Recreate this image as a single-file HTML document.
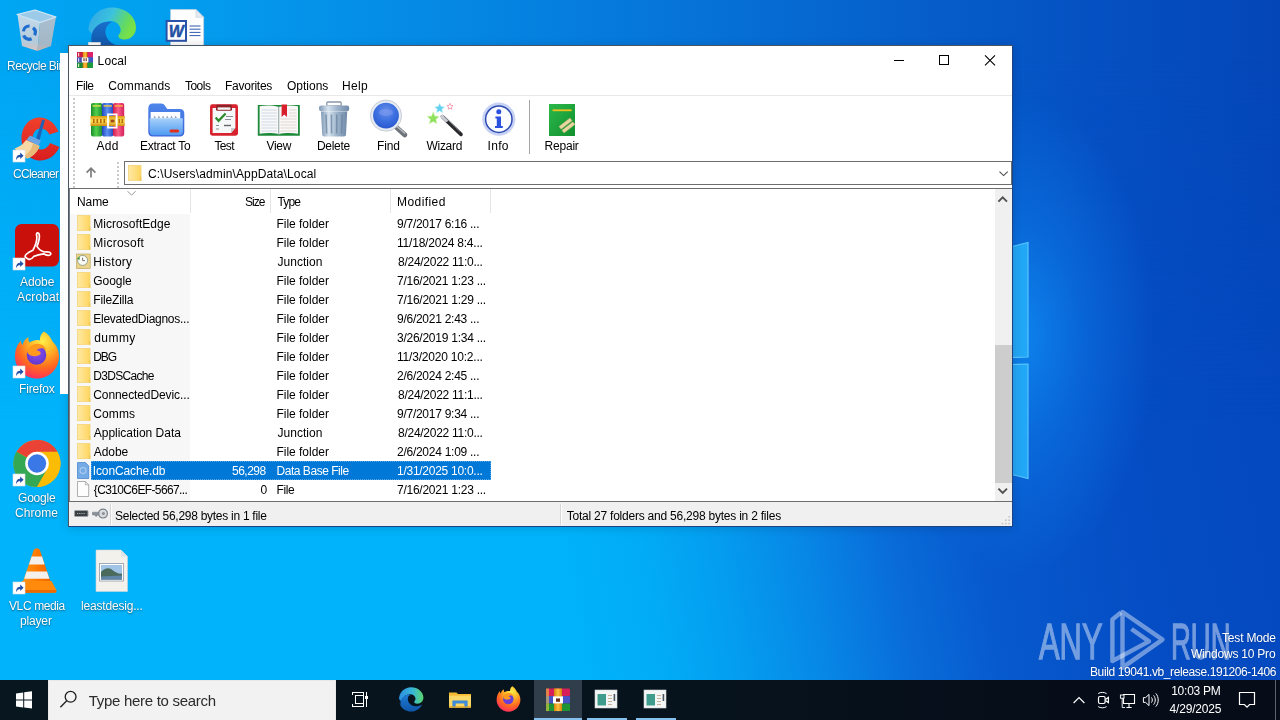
<!DOCTYPE html>
<html lang="en">
<head>
<meta charset="utf-8">
<title>Local - WinRAR</title>
<style>
*{box-sizing:border-box;margin:0;padding:0}
html,body{width:1280px;height:720px;overflow:hidden}
body{position:relative;font-family:"Liberation Sans",sans-serif;font-size:12px;color:#000;background:#0a6fd8}
#wall{position:absolute;left:0;top:0;width:1280px;height:720px;
 background:linear-gradient(80deg,#00b3fa 0%,#00b3fa 42%,#02abf6 48%,#049cef 53.5%,#0786e6 59.5%,#096cd9 65.5%,#0759cd 72%,#054dc4 83%,#0446bd 100%)}
#wallTop{position:absolute;left:0;top:0;width:1280px;height:420px;
 background:linear-gradient(90deg,#00a6f3 0,#02a0ef 150px,#0498ec 240px,#058ce6 400px,#0584e2 500px,#0672d8 700px,#0660cc 900px,#0550c2 1100px,#0446b8 1280px);
 -webkit-mask-image:linear-gradient(180deg,#000 0,#000 60px,rgba(0,0,0,0) 100%);mask-image:linear-gradient(180deg,#000 0,#000 60px,rgba(0,0,0,0) 100%)}
#glow{position:absolute;left:0;top:0;width:1280px;height:720px;
 background:radial-gradient(ellipse 135px 240px at 1020px 335px, rgba(14,136,240,.9), rgba(14,130,238,.45) 45%, rgba(16,132,236,0) 100%)}
#win,#task,.dlabel,.wm{will-change:transform}
svg.ov{position:absolute;left:0;top:0;width:1280px;height:720px;pointer-events:none}
.dlabel{position:absolute;color:#fff;font-size:12px;line-height:15px;text-shadow:0 1px 2px rgba(0,0,0,.42),0 0 1px rgba(0,0,0,.3);white-space:nowrap}
#backwin{position:absolute;left:60px;top:53px;width:8px;height:341px;background:#fdfdfd}
#win{position:absolute;left:68px;top:45px;width:945px;height:482px;background:#fff;border:1px solid #4a5562;border-right-color:#1c4484;border-bottom-color:#1c4484;box-shadow:0 1px 9px rgba(0,0,0,.16)}
#title{position:absolute;left:0;top:0;width:943px;height:29px;background:#fff}
#title .t{position:absolute;top:8px;font-size:12px;line-height:14px;white-space:pre}
#menu{position:absolute;left:0;top:29px;width:943px;height:20px;background:#fff}
#menu span{position:absolute;top:4px;line-height:14px;white-space:pre}
#menusep{position:absolute;left:0;top:49px;width:943px;height:1px;background:#e8e8e8}
#tool{position:absolute;left:0;top:50px;width:943px;height:63px;background:#fff}
.tl{position:absolute;top:43px;line-height:14px;white-space:pre}
#addr{position:absolute;left:0;top:113px;width:943px;height:28px;background:#fff}
#combo{position:absolute;left:55px;top:2px;width:888px;height:24px;border:1px solid #6e6e6e;background:#fff}
#combo .p{position:absolute;top:5px;line-height:14px;white-space:pre}
#listwrap{position:absolute;left:0;top:142px;width:943px;height:314px;border-top:1px solid #6d6d6d;border-bottom:1px solid #6d6d6d;background:#fff}
#listwrap:before{content:"";position:absolute;left:0;top:0;width:1px;height:312px;background:#7a7f86;z-index:3}
#hdr{position:absolute;left:0;top:0;width:926px;height:24px;background:#fff}
#hdr span{position:absolute;top:6px;line-height:14px;white-space:pre}
#hdr i{position:absolute;top:0;width:1px;height:24px;background:#e5e5e5}
#namecol{position:absolute;left:1px;top:25px;width:120px;height:287px;background:#f7f7f7}
.row{position:absolute;left:0;width:926px;height:19px;line-height:19px;white-space:nowrap}
.row span{position:absolute;top:1px;white-space:pre}
.row.sel .bg{position:absolute;left:22px;top:0;width:400px;height:19px;background:#0078d7;outline:1px dotted rgba(255,255,255,.35);outline-offset:-1px}
.row.sel span{color:#fff}
#sbar{position:absolute;left:926px;top:0;width:17px;height:312px;background:#f0f0f0}
#sbar .th{position:absolute;left:0;top:156px;width:17px;height:138px;background:#cdcdcd}
#status{position:absolute;left:0;top:456px;width:943px;height:24px;background:#f0f0f0}
#status span{position:absolute;top:7px;line-height:14px;white-space:pre}
#status i{position:absolute;top:2px;width:2px;height:21px;background:#fff;border-left:1px solid #d7d7d7}
#task{position:absolute;left:0;top:680px;width:1280px;height:40px;background:linear-gradient(90deg,#08161f 0,#07131c 700px,#060e1a 1000px,#060c18 1280px)}
#start{position:absolute;left:0;top:0;width:48px;height:40px;background:#08171f}
#search{position:absolute;left:48px;top:0;width:288px;height:40px;background:#f2f2f2;border:1px solid #e6e8ea;border-bottom:0}
#search .t{position:absolute;font-size:15px;line-height:18px;color:#2b2b2b;white-space:pre}
#active{position:absolute;left:534px;top:0;width:48px;height:40px;background:#2f3e4a}
.ul{position:absolute;top:38px;height:2px;background:#85c1ee}
.clk{position:absolute;color:#fff;font-size:12px;line-height:18px;white-space:pre}
.wm{position:absolute;color:#fff;font-size:12px;line-height:16px;white-space:pre;text-shadow:0 0 2px rgba(0,0,0,.3)}
</style>
</head>
<body>
<div id="wall"></div><div id="wallTop"></div><div id="glow"></div>
<svg class="ov" viewBox="0 0 1280 720">
<defs>
 <linearGradient id="rb1" x1="0" y1="0" x2="0" y2="1"><stop offset="0" stop-color="#c3d9ea"/><stop offset=".75" stop-color="#b4cbdc"/><stop offset="1" stop-color="#d9c3bd"/></linearGradient>
 <linearGradient id="rb2" x1="0" y1="0" x2="0" y2="1"><stop offset="0" stop-color="#a9bfd0"/><stop offset=".8" stop-color="#a3b7c6"/><stop offset="1" stop-color="#c9b4ae"/></linearGradient>
 <linearGradient id="edg1" x1="0" y1="0" x2="1" y2=".35"><stop offset="0" stop-color="#2fa2e6"/><stop offset=".5" stop-color="#3cc2de"/><stop offset=".85" stop-color="#62da62"/><stop offset="1" stop-color="#78e048"/></linearGradient>
 <linearGradient id="edg2" x1="0" y1="0" x2="0" y2="1"><stop offset="0" stop-color="#1a6fcb"/><stop offset="1" stop-color="#0e4fa0"/></linearGradient>
 <radialGradient id="ffx" cx=".62" cy=".2" r=".95"><stop offset="0" stop-color="#fff04a"/><stop offset=".3" stop-color="#ffb627"/><stop offset=".6" stop-color="#ff6a1f"/><stop offset=".85" stop-color="#ff3358"/><stop offset="1" stop-color="#e8207a"/></radialGradient>
 <radialGradient id="ffp" cx=".5" cy=".4" r=".7"><stop offset="0" stop-color="#8a4df0"/><stop offset="1" stop-color="#5a36c8"/></radialGradient>
 <linearGradient id="vlc" x1="0" y1="0" x2="1" y2="0"><stop offset="0" stop-color="#ff9a1e"/><stop offset=".5" stop-color="#ff7a00"/><stop offset="1" stop-color="#f06400"/></linearGradient>
 <linearGradient id="ccr" x1="0" y1="0" x2="0" y2="1"><stop offset="0" stop-color="#f0402c"/><stop offset="1" stop-color="#d81e1e"/></linearGradient>
 <g id="sc"><rect x="0" y="0" width="12" height="12" fill="#fff" stroke="#d8dde3" stroke-width=".6"/><path d="M3 10.2 C3 6.5 4.6 4.9 7.2 4.8 L7.2 2.6 L10.6 5.8 L7.2 9 L7.2 6.9 C5.4 6.9 4.2 7.8 3 10.2Z" fill="#2452a8"/></g>
</defs>

<!-- Windows logo panes of wallpaper -->
<g>
 <polygon points="1010,247 1028,242.5 1028,357 1010,357.5" fill="#22a6f6" stroke="#5ac6ff" stroke-width="1.2"/>
 <polygon points="1010,364.5 1028,364 1028,478.5 1010,474" fill="#22a6f6" stroke="#5ac6ff" stroke-width="1.2"/>
</g>

<!-- ANY.RUN watermark -->
<g fill="#fff" stroke="#fff" stroke-width="1.3" opacity=".44" font-family="Liberation Sans, sans-serif" font-size="50.5">
 <text x="1039" y="658.5" textLength="63.5" lengthAdjust="spacingAndGlyphs">ANY</text>
 <text x="1171" y="658.5" textLength="59.5" lengthAdjust="spacingAndGlyphs">RUN</text>
</g>
<g fill="none" stroke="#fff" stroke-opacity=".42" stroke-width="4.4" stroke-linejoin="round">
 <path d="M1122.5 612 L1162.5 639.6 L1122.5 667.6 Z"/>
 <path d="M1121 612.6 L1112.4 619.4 L1112.4 661 L1149 641.4 L1131.5 629"/>
</g>

<!-- Recycle Bin -->
<g>
 <polygon points="17.5,15 40,22.5 37.5,51 22,46" fill="url(#rb1)"/>
 <polygon points="40,22.5 56,17 51,46 37.5,51" fill="url(#rb2)"/>
 <polygon points="17,14.5 35,10 56,17 40,22.5" fill="#9ccbea" stroke="#d6e8f4" stroke-width="1.2" stroke-linejoin="round"/>
 <g fill="none" stroke="#1d6dce" stroke-width="3.2">
  <path d="M23.4 31.4 A6 6 0 0 1 29.6 26"/>
  <path d="M33 27.8 A6 6 0 0 1 34.6 35.2"/>
  <path d="M31.6 38.8 A6 6 0 0 1 23.6 35.4"/>
 </g>
</g>

<!-- Edge desktop icon -->
<g>
 <path d="M88.5 30 C89 17 99 7.5 112 7.5 C126 7.5 136 17 136 27.5 C136 35 130.5 39.5 124.5 39.5 C119.5 39.5 117.5 37 118.5 35 C120.5 33 121 30.5 120.5 28.5 C119.5 23.5 114.5 20.5 109.5 21 C101 21.5 95 27 93 35 Z" fill="url(#edg1)"/>
 <path d="M88.5 30 C88 42 96 52 108 54 L122 54 L122 46 C113 46 106.5 40.5 105.5 33 C105 28 108 23.5 112 22 C104 20.5 95.5 24.5 92.5 32 C91 36 91 40 92 43 C89.5 39 88.3 34.5 88.5 30Z" fill="url(#edg2)"/>
</g>

<use href="#sc" x="88.3" y="42.3"/>
<!-- Word doc icon -->
<g>
 <path d="M170.6 9.6 L196 9.6 L203.6 17.2 L203.6 50 L170.6 50Z" fill="#fdfdfd" stroke="#c9d3dc" stroke-width=".7"/>
 <path d="M196 9.6 L196 17.2 L203.6 17.2Z" fill="#e4eaef" stroke="#c2ccd6" stroke-width=".6"/>
 <g stroke="#2f5bb0" stroke-width="1"><path d="M189.5 26H200.5M189.5 29.2H200.5M189.5 32.4H200.5M189.5 35.6H200.5"/></g>
 <rect x="166.6" y="21" width="19.4" height="19.8" fill="#fff" stroke="#2a52a8" stroke-width="2"/>
 <text x="176.3" y="36.6" font-family="Liberation Sans,sans-serif" font-weight="bold" font-style="italic" font-size="16" text-anchor="middle" fill="#2450a4" stroke="#2450a4" stroke-width=".5">W</text>
</g>

<!-- CCleaner -->
<g>
 <path d="M58.5 131.5 C55 123 47.5 117.5 39.5 117.5 C29 117.5 21.5 127 21.5 138.5 C21.5 151 29.5 160.5 40 160.5 C48.5 160.5 55.5 155.5 59.5 147 L50 143 C48 147 45 149.5 41 149.5 C35.5 149.5 32.5 144.5 32.5 139 C32.5 133.5 35.5 128.5 41 128.5 C44.5 128.5 47.5 130.8 49.5 134.5Z" fill="url(#ccr)"/>
 <path d="M42.3 119.5 L44.8 120.3 L38.8 143 L35 141.8Z" fill="#1f63b8"/>
 <path d="M30 135.5 L41 140.5 L38.5 145.5 L26.5 140Z" fill="#6aa6e6"/>
 <path d="M26 140 L39.5 146 C37.5 152 33 156.5 27 158.5 L14.5 148.5 C19.5 147 23.5 144 26 140Z" fill="#f6d9a4"/>
 <path d="M33 143.2 L39.5 146 C37.5 152 33 156.5 27 158.5 L24 156 C29 153 32 148.5 33 143.2Z" fill="#e9b978"/>
 <use href="#sc" x="13" y="150"/>
</g>

<!-- Adobe Acrobat -->
<g>
 <rect x="15" y="224" width="44" height="42.5" rx="6.5" fill="#c9100b"/>
 <path d="M25.5 257.2 C24 255.8 27.5 252.4 33 250.2 C35.5 245.4 37.6 239.6 36.6 235.2 C36 232.6 38.6 232 39.2 234.6 C40 238.2 38.2 243.2 37 246.4 C39 249.6 41.6 251.4 44.6 252 C48.8 251.4 51.4 252.6 50.6 254.4 C49.8 256 46.6 255.6 43.6 253.8 C40.4 254.2 36.6 255.2 33.6 256.6 C30.4 261.4 27 258.8 25.5 257.2Z" fill="none" stroke="#fff" stroke-width="1.7" stroke-linejoin="round"/>
 <use href="#sc" x="13" y="258"/>
</g>

<!-- Firefox -->
<g>
 <path d="M44 331.5 C47.5 333.5 50.5 337 52.5 341.5 C56.5 345 59 350.5 59 356.5 C59 368.5 49.5 378.5 37 378.5 C24.5 378.5 15 368.5 15 356.5 C15 349.5 17.5 344 21 340.5 C21 342.5 21.5 344 22.5 345 C23.5 341.5 25.5 338.5 28.5 337 C28 339 28.5 341 29.5 342.5 C32.5 340.5 36.5 339.5 40 340.5 C39.5 337 41 333.5 44 331.5Z" fill="url(#ffx)"/>
 <circle cx="36.5" cy="355" r="9.8" fill="url(#ffp)"/>
 <path d="M27 352 C28.5 346 34 343 39.5 344 C44 345 46 348 46.5 350 C43 347.5 38.5 348 36.5 350.5 C39.5 350.5 41 352 40.5 354 C38.5 356.5 32 357 29 354.5Z" fill="#ff9a1f"/>
 <use href="#sc" x="13" y="366"/>
</g>

<!-- Chrome -->
<g>
 <circle cx="37" cy="463.5" r="23.5" fill="#fbbc05"/>
 <path d="M37 463.5 L16.65 451.75 A23.5 23.5 0 0 1 57.35 451.75 Z" fill="#ea4335"/>
 <path d="M37 440 A23.5 23.5 0 0 1 57.35 451.75 L37 451.75Z" fill="#ea4335"/>
 <path d="M16.65 451.75 A23.5 23.5 0 0 0 37 487 L48.2 467.5 L37 463.5 Z" fill="#34a853"/>
 <path d="M16.65 451.75 L26.8 469.4 L37 475.3 L31 486.2 A23.5 23.5 0 0 1 16.65 451.75Z" fill="#34a853"/>
 <path d="M57.35 451.75 L37 451.75 L47.2 469.4 L37 487 A23.5 23.5 0 0 0 57.35 451.75Z" fill="#fbbc05"/>
 <circle cx="37" cy="463.5" r="11.8" fill="#fff"/>
 <circle cx="37" cy="463.5" r="9.2" fill="#3b78e7"/>
 <use href="#sc" x="13" y="474"/>
</g>

<!-- VLC -->
<g>
 <path d="M36.8 548.3 C38.6 548.3 39.6 549.4 40.2 551 L51 583 L22.5 583 L33.4 551 C34 549.4 35 548.3 36.8 548.3Z" fill="url(#vlc)"/>
 <path d="M31.6 556.5 L42 556.5 L44.6 564.5 L29 564.5Z" fill="#f4f0ec"/>
 <path d="M26.6 571.5 L47 571.5 L49.4 578.8 L24.2 578.8Z" fill="#f4f0ec"/>
 <path d="M22 581 L51.5 581 L56.3 590 C56.8 591.6 56 592.8 54.4 592.8 L19.2 592.8 C17.6 592.8 16.8 591.6 17.3 590Z" fill="#ff8a0c"/>
 <path d="M19.2 592.8 L54.4 592.8 C56 592.8 56.8 591.6 56.3 590 L17.3 590 C16.8 591.6 17.6 592.8 19.2 592.8Z" fill="#e86a00"/>
 <use href="#sc" x="13" y="582"/>
</g>

<!-- image file icon -->
<g>
 <path d="M96 550 L121 550 L127.5 556.5 L127.5 591.5 L96 591.5Z" fill="#f3f1ec" stroke="#cfd5da" stroke-width=".6"/>
 <path d="M121 550 L121 556.5 L127.5 556.5Z" fill="#dfe3e6"/>
 <rect x="99.5" y="563.5" width="24" height="17.5" fill="#fff" stroke="#8f98a8" stroke-width=".8"/>
 <rect x="101" y="565" width="21" height="14.5" fill="#9fc4e6"/>
 <path d="M101 572 C105 568 109 567 113 570.5 C116 573 119 574 122 573.5 L122 579.5 L101 579.5Z" fill="#4a6b5c"/>
 <path d="M101 576.5 L122 575.5 L122 579.5 L101 579.5Z" fill="#5f86a8"/>
</g>
</svg>
<div class="dlabel" style="left:7.30px;top:59px;letter-spacing:-0.520px">Recycle Bin</div>
<div class="dlabel" style="left:13.00px;top:167px;letter-spacing:-0.671px">CCleaner</div>
<div class="dlabel" style="left:19.90px;top:275px;letter-spacing:-0.100px">Adobe</div>
<div class="dlabel" style="left:16.75px;top:290px;letter-spacing:0.142px">Acrobat</div>
<div class="dlabel" style="left:18.90px;top:382px;letter-spacing:-0.167px">Firefox</div>
<div class="dlabel" style="left:17.50px;top:491px;letter-spacing:-0.200px">Google</div>
<div class="dlabel" style="left:15.20px;top:506px;letter-spacing:0.060px">Chrome</div>
<div class="dlabel" style="left:8.80px;top:599px;letter-spacing:-0.387px">VLC media</div>
<div class="dlabel" style="left:20.30px;top:614px;letter-spacing:-0.160px">player</div>
<div class="dlabel" style="left:80.75px;top:599px;letter-spacing:-0.188px">leastdesig...</div>
<div id="win">
 <div id="title"><span class="t" style="left:28.60px;letter-spacing:0.125px">Local</span></div>
 <div id="menu"><span style="left:7.00px;letter-spacing:-0.433px">File</span><span style="left:39.30px;letter-spacing:0.086px">Commands</span><span style="left:115.90px;letter-spacing:-0.475px">Tools</span><span style="left:156.00px;letter-spacing:-0.250px">Favorites</span><span style="left:218.00px;letter-spacing:0.000px">Options</span><span style="left:273.00px;letter-spacing:0.333px">Help</span></div>
 <div id="menusep"></div>
 <div id="tool"><span class="tl" style="left:27.50px;letter-spacing:0.250px">Add</span><span class="tl" style="left:71.10px;letter-spacing:-0.289px">Extract To</span><span class="tl" style="left:145.50px;letter-spacing:-0.667px">Test</span><span class="tl" style="left:197.50px;letter-spacing:-0.333px">View</span><span class="tl" style="left:248.00px;letter-spacing:-0.300px">Delete</span><span class="tl" style="left:308.00px;letter-spacing:-0.167px">Find</span><span class="tl" style="left:357.50px;letter-spacing:-0.300px">Wizard</span><span class="tl" style="left:418.50px;letter-spacing:0.333px">Info</span><span class="tl" style="left:475.50px;letter-spacing:-0.200px">Repair</span></div>
 <div id="addr"><div id="combo"><span class="p" style="left:23.00px;letter-spacing:0.130px">C:\Users\admin\AppData\Local</span></div></div>
 <div id="listwrap">
  <div id="hdr"><span style="left:8.00px;letter-spacing:-0.083px">Name</span><span style="left:176.00px;letter-spacing:-1.000px">Size</span><span style="left:208.50px;letter-spacing:-0.833px">Type</span><span style="left:328.00px;letter-spacing:0.429px">Modified</span><i style="left:121px"></i><i style="left:201px"></i><i style="left:321px"></i><i style="left:421px"></i></div>
  <div id="namecol"></div>
  <div class="row" style="top:25px"><span style="left:24.25px;letter-spacing:0.042px">MicrosoftEdge</span><span style="left:207.50px;letter-spacing:-0.025px">File folder</span><span style="left:328.00px;letter-spacing:-0.266px">9/7/2017 6:16 ...</span></div>
  <div class="row" style="top:44px"><span style="left:24.25px;letter-spacing:0.250px">Microsoft</span><span style="left:207.50px;letter-spacing:-0.025px">File folder</span><span style="left:328.00px;letter-spacing:-0.203px">11/18/2024 8:4...</span></div>
  <div class="row" style="top:63px"><span style="left:24.25px;letter-spacing:0.250px">History</span><span style="left:208.50px;letter-spacing:0.036px">Junction</span><span style="left:329.00px;letter-spacing:-0.266px">8/24/2022 11:0...</span></div>
  <div class="row" style="top:82px"><span style="left:24.25px;letter-spacing:-0.050px">Google</span><span style="left:207.50px;letter-spacing:-0.025px">File folder</span><span style="left:328.00px;letter-spacing:-0.250px">7/16/2021 1:23 ...</span></div>
  <div class="row" style="top:101px"><span style="left:24.25px;letter-spacing:-0.156px">FileZilla</span><span style="left:207.50px;letter-spacing:-0.025px">File folder</span><span style="left:328.00px;letter-spacing:-0.250px">7/16/2021 1:29 ...</span></div>
  <div class="row" style="top:120px"><span style="left:24.25px;letter-spacing:-0.265px">ElevatedDiagnos...</span><span style="left:207.50px;letter-spacing:-0.025px">File folder</span><span style="left:328.00px;letter-spacing:-0.266px">9/6/2021 2:43 ...</span></div>
  <div class="row" style="top:139px"><span style="left:25.25px;letter-spacing:0.438px">dummy</span><span style="left:207.50px;letter-spacing:-0.025px">File folder</span><span style="left:328.00px;letter-spacing:-0.250px">3/26/2019 1:34 ...</span></div>
  <div class="row" style="top:158px"><span style="left:24.25px;letter-spacing:-1.125px">DBG</span><span style="left:207.50px;letter-spacing:-0.025px">File folder</span><span style="left:328.00px;letter-spacing:-0.203px">11/3/2020 10:2...</span></div>
  <div class="row" style="top:177px"><span style="left:24.25px;letter-spacing:-0.688px">D3DSCache</span><span style="left:207.50px;letter-spacing:-0.025px">File folder</span><span style="left:328.00px;letter-spacing:-0.266px">2/6/2024 2:45 ...</span></div>
  <div class="row" style="top:196px"><span style="left:24.25px;letter-spacing:-0.094px">ConnectedDevic...</span><span style="left:207.50px;letter-spacing:-0.025px">File folder</span><span style="left:329.00px;letter-spacing:-0.266px">8/24/2022 11:1...</span></div>
  <div class="row" style="top:215px"><span style="left:24.25px;letter-spacing:0.125px">Comms</span><span style="left:207.50px;letter-spacing:-0.025px">File folder</span><span style="left:328.00px;letter-spacing:-0.266px">9/7/2017 9:34 ...</span></div>
  <div class="row" style="top:234px"><span style="left:24.75px;letter-spacing:-0.017px">Application Data</span><span style="left:208.50px;letter-spacing:0.036px">Junction</span><span style="left:329.00px;letter-spacing:-0.266px">8/24/2022 11:0...</span></div>
  <div class="row" style="top:253px"><span style="left:24.75px;letter-spacing:-0.062px">Adobe</span><span style="left:207.50px;letter-spacing:-0.025px">File folder</span><span style="left:328.00px;letter-spacing:-0.266px">2/6/2024 1:09 ...</span></div>
  <div class="row sel" style="top:272px"><div class="bg"></div><span style="left:23.75px;letter-spacing:-0.114px">IconCache.db</span><span style="left:163.00px;letter-spacing:-0.500px">56,298</span><span style="left:207.50px;letter-spacing:-0.462px">Data Base File</span><span style="left:328.00px;letter-spacing:-0.266px">1/31/2025 10:0...</span></div>
  <div class="row" style="top:291px"><span style="left:24.75px;letter-spacing:-0.625px">{C310C6EF-5667...</span><span style="left:191.50px;letter-spacing:0.000px">0</span><span style="left:207.50px;letter-spacing:-0.417px">File</span><span style="left:328.00px;letter-spacing:-0.250px">7/16/2021 1:23 ...</span></div>
  <div id="sbar"><div class="th"></div></div>
 </div>
 <div id="status"><i style="left:41px"></i><span style="left:46.00px;letter-spacing:-0.275px">Selected 56,298 bytes in 1 file</span><i style="left:491px"></i><span style="left:497.75px;letter-spacing:-0.227px">Total 27 folders and 56,298 bytes in 2 files</span></div>
</div>
<div id="backwin"></div>
<svg class="ov" viewBox="0 0 1280 720">
<defs>
 <linearGradient id="bkG" x1="0" x2="1" y1="0" y2="0"><stop offset="0" stop-color="#178a2a"/><stop offset=".45" stop-color="#52cf4c"/><stop offset="1" stop-color="#1c8c30"/></linearGradient>
 <linearGradient id="bkB" x1="0" x2="1" y1="0" y2="0"><stop offset="0" stop-color="#2146c0"/><stop offset=".45" stop-color="#5b92f2"/><stop offset="1" stop-color="#2448c2"/></linearGradient>
 <linearGradient id="bkR" x1="0" x2="1" y1="0" y2="0"><stop offset="0" stop-color="#d01848"/><stop offset=".45" stop-color="#f8608a"/><stop offset="1" stop-color="#d4205c"/></linearGradient>
 <linearGradient id="belt" x1="0" x2="0" y1="0" y2="1"><stop offset="0" stop-color="#d89a10"/><stop offset=".5" stop-color="#ffe25a"/><stop offset="1" stop-color="#d08c0c"/></linearGradient>
 <linearGradient id="beltV" x1="0" x2="1" y1="0" y2="0"><stop offset="0" stop-color="#d8820c"/><stop offset=".5" stop-color="#ffc040"/><stop offset="1" stop-color="#d8820c"/></linearGradient>
 <linearGradient id="fol1" x1="0" x2="0" y1="0" y2="1"><stop offset="0" stop-color="#4d86ea"/><stop offset="1" stop-color="#3a64d8"/></linearGradient>
 <linearGradient id="fol2" x1="0" x2="0" y1="0" y2="1"><stop offset="0" stop-color="#a6d0fa"/><stop offset="1" stop-color="#4f9af2"/></linearGradient>
 <linearGradient id="can" x1="0" x2="1" y1="0" y2="0"><stop offset="0" stop-color="#7f98b4"/><stop offset=".3" stop-color="#d5e2ee"/><stop offset=".6" stop-color="#9fb5cc"/><stop offset="1" stop-color="#6f89a6"/></linearGradient>
 <radialGradient id="lens" cx=".5" cy=".35" r=".7"><stop offset="0" stop-color="#6a8fe8"/><stop offset=".5" stop-color="#3b6fe0"/><stop offset="1" stop-color="#2450c8"/></radialGradient>
 <linearGradient id="rep" x1="0" x2="1" y1="0" y2="1"><stop offset="0" stop-color="#2bb84a"/><stop offset="1" stop-color="#12902e"/></linearGradient>
 <linearGradient id="fy" x1="0" x2="1" y1="0" y2="0"><stop offset="0" stop-color="#ffe9a6"/><stop offset="1" stop-color="#ffd55e"/></linearGradient>
 <g id="fold"><rect x="0" y="0" width="12.5" height="15" fill="url(#fy)" stroke="#f3d478" stroke-width=".8"/><path d="M11.3 10.5 L12.9 12 L12.9 15.4 L11.3 15.4Z" fill="#f0c95a"/></g>
 <g id="wr16">
  <rect x="0" y="0" width="16" height="5.4" fill="#cc1a40"/><rect x="0" y="5.3" width="16" height="5.4" fill="#4348ac"/><rect x="0" y="10.6" width="16" height="5.4" fill="#1c8a32"/>
  <rect x="11" y="0" width="5" height="5.4" fill="#e0206a"/><rect x="11" y="5.3" width="5" height="5.4" fill="#3c58c4"/><rect x="11" y="10.6" width="5" height="5.4" fill="#1e9a3a"/>
  <rect x="1" y=".8" width="1.2" height="3.6" fill="#ffd0d0"/><rect x="1" y="6.2" width="1.2" height="3.6" fill="#d8dcff"/><rect x="1" y="11.6" width="1.2" height="3.4" fill="#d0f0c8"/>
  <rect x="5.8" y="0" width="4.6" height="16" fill="url(#beltV)"/>
  <rect x="4.8" y="5.4" width="6.6" height="5" rx="1" fill="#fff"/><rect x="6.4" y="6.2" width="1.2" height="3" fill="#7a3a20"/><rect x="8.6" y="6.2" width="1.2" height="3" fill="#7a3a20"/>
 </g>
</defs>

<!-- title icon -->
<use href="#wr16" x="77" y="52"/>
<!-- caption buttons -->
<g stroke="#000" stroke-width="1" fill="none" shape-rendering="crispEdges">
 <path d="M894 60.5H904"/>
 <rect x="939.5" y="55.5" width="9" height="9"/>
</g>
<path d="M985 55.3 L995 65.3 M995 55.3 L985 65.3" stroke="#000" stroke-width="1.1" fill="none"/>

<!-- toolbar grippers -->
<g stroke="#c9c9c9" stroke-width="2" stroke-dasharray="2 2" fill="none" shape-rendering="crispEdges">
 <path d="M74 98V188"/><path d="M118 162V188"/>
</g>

<!-- Add -->
<g>
 <rect x="91" y="103" width="11.4" height="33.4" rx="2" fill="url(#bkG)"/>
 <rect x="102" y="103" width="11.4" height="33.4" rx="2" fill="url(#bkB)"/>
 <rect x="113" y="103" width="11.2" height="33.4" rx="2" fill="url(#bkR)"/>
 <rect x="92.5" y="105" width="8.4" height="1.8" fill="#d8e04a" opacity=".8"/><rect x="103.5" y="105" width="8.4" height="1.8" fill="#f0c84a" opacity=".8"/><rect x="114.5" y="105" width="8.4" height="1.8" fill="#ffb040" opacity=".8"/>
 <rect x="90.5" y="116" width="34.2" height="10" fill="url(#belt)"/>
 <g fill="#b86a08"><rect x="93" y="119" width="1.6" height="4"/><rect x="96.5" y="119" width="1.6" height="4"/><rect x="100" y="119" width="1.6" height="4"/><rect x="103.5" y="119" width="1.6" height="4"/><rect x="118.5" y="119" width="1.6" height="4"/><rect x="121.5" y="119" width="1.6" height="4"/></g>
 <rect x="108" y="114.4" width="8.6" height="13.2" fill="none" stroke="#fff" stroke-width="1.8"/>
 <rect x="110.5" y="119.6" width="4" height="2.8" fill="#a04818"/>
</g>

<!-- Extract To -->
<g>
 <path d="M148.3 108 C148.3 105.5 150 103.5 152.5 103.5 L161 103.5 C163 103.5 164 104.3 165 105.8 L167.2 109 L180 109 C182.6 109 184.3 110.8 184.3 113.4 L184.3 132 C184.3 134.8 182.6 136.5 180 136.5 L152.5 136.5 C150 136.5 148.3 134.8 148.3 132Z" fill="url(#fol1)"/>
 <rect x="150.6" y="112" width="29.6" height="10" fill="#fafcff"/>
 <g fill="#9aa6b6"><path d="M153.5 118 l1.2 -2.6 l1.2 2.6z M157.7 118 l1.2 -2.6 l1.2 2.6z M161.9 118 l1.2 -2.6 l1.2 2.6z M166.1 118 l1.2 -2.6 l1.2 2.6z M170.3 118 l1.2 -2.6 l1.2 2.6z M174.5 118 l1.2 -2.6 l1.2 2.6z"/></g>
 <path d="M149.6 118.3 L182.8 118.3 L182.8 132 C182.8 134 181.5 135.2 179.6 135.2 L152.8 135.2 C150.9 135.2 149.6 134 149.6 132Z" fill="url(#fol2)"/>
 <rect x="169.5" y="129.6" width="9.6" height="3" rx="1.5" fill="#e0301c"/>
</g>

<!-- Test -->
<g>
 <rect x="210" y="104.3" width="28" height="31.4" rx="2.4" fill="#d8222e"/>
 <path d="M212.6 108 L235.4 108 L235.4 128 L231 133 L212.6 133Z" fill="#f6f7f8"/>
 <path d="M235.4 128 L231 133 L231 128Z" fill="#c8ccd2"/>
 <rect x="216" y="104.8" width="16" height="6" rx="1.4" fill="#8e2228"/>
 <rect x="217.6" y="107.4" width="12.8" height="2.4" fill="#f4f4f4"/>
 <path d="M215.6 117.6 L218.6 120.8 L225.6 113.6" fill="none" stroke="#2c8a2c" stroke-width="2.2"/>
 <g stroke="#8a8f98" stroke-width="1.1"><path d="M226 116.5H233M225 119.5H231"/><path d="M224 125.5H231" stroke="#666" stroke-width="1.4"/><path d="M216 125.5H219M216 129H219"/></g>
</g>

<!-- View -->
<g>
 <path d="M257.8 105 L278.8 105 L299.8 105 L299.8 135.8 L257.8 135.8Z" fill="#1d8a3a"/>
 <path d="M259.6 106.2 C266 105.2 273 105.4 278.6 107 L278.6 134.2 C273 132.8 266 132.8 259.6 133.8Z" fill="#f7f8f7"/>
 <path d="M298 106.2 C291.6 105.2 284.6 105.4 279 107 L279 134.2 C284.6 132.8 291.6 132.8 298 133.8Z" fill="#f7f8f7"/>
 <g stroke="#c9d3e6" stroke-width=".8"><path d="M261.5 110H277M261.5 113H277M261.5 116H277M261.5 119H277M261.5 122H277M261.5 125H277M261.5 128H277M261.5 131H277"/><path d="M280.5 119H296.5M280.5 122H296.5M280.5 125H296.5M280.5 128H296.5M280.5 131H296.5M289 110H296.5M289 113H296.5M289 116H296.5" stroke="#e0cfc8"/></g>
 <path d="M278.8 106.5V134.5" stroke="#a8aeb4" stroke-width="1"/>
 <path d="M281.6 104.6 L287 104.6 L287 117 L284.3 114.6 L281.6 117Z" fill="#d8202c"/>
</g>

<!-- Delete -->
<g>
 <rect x="326.8" y="102" width="14.4" height="4" rx="1" fill="none" stroke="#8a97a6" stroke-width="1.3"/>
 <rect x="319" y="105.4" width="30.2" height="6" rx="2.4" fill="url(#can)"/>
 <path d="M321 111.8 L347.2 111.8 L346 134.6 C346 135.8 345 136.5 344 136.5 L324.2 136.5 C323.2 136.5 322.2 135.8 322.2 134.6Z" fill="url(#can)"/>
 <g stroke="#6a84a2" stroke-width="1.6" opacity=".75"><path d="M326 114.5L326.6 133.5M331.4 114.5L331.6 133.5M336.8 114.5L336.6 133.5M342.2 114.5L341.6 133.5"/></g>
</g>

<!-- Find -->
<g>
 <path d="M395.5 126.5 L404.8 134.8" stroke="#6e7379" stroke-width="5" stroke-linecap="round"/>
 <path d="M396.5 126 L404.5 133" stroke="#b8bcc2" stroke-width="1.6" stroke-linecap="round"/>
 <circle cx="386" cy="115.6" r="14.2" fill="url(#lens)" stroke="#e6ebf2" stroke-width="2.6"/>
 <circle cx="386" cy="115.6" r="15.6" fill="none" stroke="#b4bcc8" stroke-width=".7"/>
 <ellipse cx="386" cy="112.5" rx="7" ry="3.6" fill="#7f9cf0" opacity=".55"/>
</g>

<!-- Wizard -->
<g>
 <path d="M442.4 116.6 L461 134.4" stroke="#2a2a2e" stroke-width="3.6" stroke-linecap="round"/>
 <path d="M442.4 116.6 L446.2 120.2" stroke="#c8ccd2" stroke-width="3.6" stroke-linecap="round"/>
 <path d="M444 116.2 L460 131.6" stroke="#777b82" stroke-width="1" />
 <polygon points="433.2,112.2 434.8,116.2 439,116.6 435.8,119.4 436.8,123.6 433.2,121.4 429.4,123.6 430.6,119.4 427.4,116.6 431.6,116.2" fill="#8fe05a" stroke="#b8f090" stroke-width=".5"/>
 <polygon points="439.6,103.4 441,106.6 444.4,107 441.8,109.2 442.6,112.6 439.6,110.8 436.6,112.6 437.4,109.2 434.8,107 438.2,106.6" fill="#62d0ee" stroke="#a8e6f6" stroke-width=".5"/>
 <polygon points="450,103.4 450.9,105.4 453,105.7 451.4,107.1 451.9,109.2 450,108.1 448.1,109.2 448.6,107.1 447,105.7 449.1,105.4" fill="#fff" stroke="#f08aa0" stroke-width=".8"/>
</g>

<!-- Info -->
<g>
 <circle cx="498.8" cy="119.2" r="16.6" fill="#c7d2f5"/>
 <circle cx="498.8" cy="119.2" r="13.2" fill="#fbfcff" stroke="#2e4cb0" stroke-width="1.5"/>
 <circle cx="498.8" cy="111.8" r="2.5" fill="#2a50e0"/>
 <path d="M495.4 116.4 L501 116.4 L501 126 L502.8 126 L502.8 128 L495 128 L495 126 L496.8 126 L496.8 118.4 L495.4 118.4Z" fill="#2a50e0"/>
</g>

<!-- toolbar separator -->
<path d="M529.5 100V154" stroke="#a6a6a6" stroke-width="1" shape-rendering="crispEdges"/>

<!-- Repair -->
<g>
 <rect x="549" y="104" width="26" height="32" fill="url(#rep)"/>
 <rect x="552.6" y="109.4" width="19" height="1.8" fill="#f0c020"/>
 <g transform="rotate(-38 567 125.5)"><rect x="560" y="121.4" width="14" height="3.4" fill="#e8d6a0" stroke="#b8a870" stroke-width=".4"/><rect x="560" y="126.2" width="14" height="3.4" fill="#e8d6a0" stroke="#b8a870" stroke-width=".4"/></g>
</g>

<!-- address bar: up arrow, folder, chevron -->
<path d="M91 177.5V168.5M86.6 172.6L91 168.2L95.4 172.6" fill="none" stroke="#7d7d7d" stroke-width="1.7"/>
<use href="#fold" x="128.5" y="165.5"/>
<path d="M999.5 171.6L1003.6 175.6L1007.7 171.6" fill="none" stroke="#4a4a4a" stroke-width="1.1"/>

<!-- sort arrow -->
<path d="M127.6 191.2L131.6 195.2L135.6 191.2" fill="none" stroke="#8a8a8a" stroke-width=".9"/>

<!-- list icons -->
<use href="#fold" x="77.5" y="215.5"/>
<use href="#fold" x="77.5" y="234.5"/>
<g><rect x="76.6" y="254" width="13.6" height="14.6" fill="#e9d38a" stroke="#c2a85c" stroke-width=".7"/><circle cx="82.6" cy="260.4" r="5" fill="#fbfbf6" stroke="#8c9a8a" stroke-width=".9"/><path d="M82.6 257.6V260.6H85" fill="none" stroke="#555" stroke-width=".8"/><path d="M77 258.4L79.6 256.6L79.6 260Z" fill="#3c9a3c"/></g>
<use href="#fold" x="77.5" y="272.5"/>
<use href="#fold" x="77.5" y="291.5"/>
<use href="#fold" x="77.5" y="310.5"/>
<use href="#fold" x="77.5" y="329.5"/>
<use href="#fold" x="77.5" y="348.5"/>
<use href="#fold" x="77.5" y="367.5"/>
<use href="#fold" x="77.5" y="386.5"/>
<use href="#fold" x="77.5" y="405.5"/>
<use href="#fold" x="77.5" y="424.5"/>
<use href="#fold" x="77.5" y="443.5"/>
<g><path d="M77.5 462.5L85.4 462.5L88.7 465.8L88.7 478.5L77.5 478.5Z" fill="#74aae6" stroke="#4a88d0" stroke-width=".8"/><circle cx="83" cy="470.6" r="3" fill="none" stroke="#a9caf0" stroke-width="1.1"/></g>
<g><path d="M77.5 481.5L85.4 481.5L88.7 484.8L88.7 496.5L77.5 496.5Z" fill="#fdfdfd" stroke="#9a9a9a" stroke-width=".8"/><path d="M85.4 481.5V484.8H88.7" fill="none" stroke="#9a9a9a" stroke-width=".7"/></g>

<!-- scrollbar arrows -->
<path d="M998.4 201.6L1002.7 197.3L1007 201.6" fill="none" stroke="#505050" stroke-width="1.9"/>
<path d="M998.4 488.6L1002.7 492.9L1007 488.6" fill="none" stroke="#505050" stroke-width="1.9"/>

<!-- status icons -->
<g><rect x="74.5" y="510.5" width="13.5" height="6" rx="1" fill="#3a3f44" stroke="#9aa0a6" stroke-width="1"/><path d="M77 513.5H85.5" stroke="#aab0b6" stroke-width="1" stroke-dasharray="1.2 1"/></g>
<g><circle cx="103" cy="513.6" r="4.4" fill="#d9dcdf" stroke="#7a8088" stroke-width="1.2"/><circle cx="103.4" cy="513.6" r="1.5" fill="#8a9096"/><path d="M92.5 512.2H99V515H97V516.2H95.4V515H92.5Z" fill="#8a9198" stroke="#70767c" stroke-width=".5"/></g>
<!-- resize grip -->
<g fill="#c4c4c4"><rect x="1008.4" y="516" width="1.6" height="1.6"/><rect x="1008.4" y="519.4" width="1.6" height="1.6"/><rect x="1005" y="519.4" width="1.6" height="1.6"/><rect x="1008.4" y="522.8" width="1.6" height="1.6"/><rect x="1005" y="522.8" width="1.6" height="1.6"/><rect x="1001.6" y="522.8" width="1.6" height="1.6"/></g>
</svg>
<div class="wm" style="left:1221.50px;top:630px;letter-spacing:-0.175px">Test Mode</div>
<div class="wm" style="left:1190.90px;top:646px;letter-spacing:-0.215px">Windows 10 Pro</div>
<div class="wm" style="left:1089.90px;top:664px;letter-spacing:-0.397px">Build 19041.vb_release.191206-1406</div>
<div id="task">
 <div id="start"></div>
 <div id="search"><div class="t" style="left:39.70px;top:11px;letter-spacing:-0.289px">Type here to search</div></div>
 <div id="active"></div>
 <div class="ul" style="left:534px;width:48px"></div><div class="ul" style="left:587px;width:40px"></div><div class="ul" style="left:636px;width:40px"></div>
 <div class="clk" style="left:1171.20px;top:2px;letter-spacing:-0.243px">10:03 PM</div><div class="clk" style="left:1169.50px;top:20px;letter-spacing:-0.175px">4/29/2025</div>
</div>
<svg class="ov" viewBox="0 0 1280 720">
<defs>
 <linearGradient id="tE1" x1="0" y1="0" x2="1" y2="0"><stop offset="0" stop-color="#2b8fe0"/><stop offset=".55" stop-color="#37b6d8"/><stop offset="1" stop-color="#5bd66c"/></linearGradient>
 <linearGradient id="tE2" x1="0" y1="0" x2="0" y2="1"><stop offset="0" stop-color="#1f7ad4"/><stop offset="1" stop-color="#0f56a8"/></linearGradient>
 <radialGradient id="tF" cx=".62" cy=".2" r=".95"><stop offset="0" stop-color="#fff04a"/><stop offset=".3" stop-color="#ffb627"/><stop offset=".6" stop-color="#ff6a1f"/><stop offset=".85" stop-color="#ff3358"/><stop offset="1" stop-color="#e8207a"/></radialGradient>
 <linearGradient id="tBelt" x1="0" x2="1" y1="0" y2="0"><stop offset="0" stop-color="#d8820c"/><stop offset=".5" stop-color="#ffc040"/><stop offset="1" stop-color="#d8820c"/></linearGradient>
 <g id="app"><rect x="0" y="0" width="22" height="18" fill="#f4f6f6" stroke="#d0d6d8" stroke-width=".6"/><rect x="2.5" y="4" width="8.5" height="11.5" fill="#3f9c8c"/><g stroke="#c8b49c" stroke-width="1"><path d="M13 5.5H17M13 8.5H17M13 11.5H17M13 14.5H17"/></g><rect x="18.6" y="4" width="1.6" height="7" fill="#4a5560"/></g>
</defs>

<!-- start -->
<g fill="#fff">
 <polygon points="16,693.4 23.2,692.4 23.2,699.4 16,699.4"/>
 <polygon points="24.2,692.2 32,691.2 32,699.4 24.2,699.4"/>
 <polygon points="16,700.4 23.2,700.4 23.2,707.4 16,706.4"/>
 <polygon points="24.2,700.4 32,700.4 32,708.6 24.2,707.6"/>
</g>
<!-- search icon -->
<g fill="none" stroke="#1e1e1e" stroke-width="1.3"><circle cx="70.6" cy="696.8" r="5.4"/><path d="M66.7 700.8L60.4 707.2"/></g>

<!-- task view -->
<g fill="none" stroke="#fff" stroke-width="1.2" shape-rendering="crispEdges">
 <rect x="355.5" y="695.5" width="8" height="8"/>
 <path d="M352 692.5H364M352 706.5H364M352.5 692V695M352.5 704V707M363.5 692V695M363.5 704V707"/>
 <path d="M366.5 692V707"/>
</g>
<rect x="365" y="696" width="3" height="3" fill="#fff"/>

<!-- Edge -->
<g>
 <path d="M399 699 C399.3 692.3 404.4 687.3 411 687.3 C418.2 687.3 423.4 692.2 423.4 697.6 C423.4 701.5 420.5 703.8 417.4 703.8 C414.9 703.8 413.8 702.5 414.3 701.5 C415.4 700.4 415.6 699.2 415.4 698.1 C414.9 695.6 412.3 694 409.7 694.3 C405.4 694.5 402.3 697.4 401.3 701.5Z" fill="url(#tE1)"/>
 <path d="M399 699 C398.7 705.2 402.9 710.4 409 711.4 C412.4 711.9 415.8 711.1 418.6 709 C420.2 707.7 421.4 706.2 422 704.6 C419.6 706.3 416.4 706.8 413.6 706 C409.7 704.9 407.6 701.7 407.8 698.6 C407.9 696.8 409.2 695.2 411 694.6 C406.9 694.1 402.6 696.1 401 700 C400.2 702.1 400.3 704.1 400.8 705.7 C399.5 703.6 398.9 701.3 399 699Z" fill="url(#tE2)"/>
</g>

<!-- Explorer -->
<g>
 <path d="M449 692.4 L456.4 692.4 L458 694 L471 694 L471 707.6 L449 707.6Z" fill="#f5b932"/>
 <rect x="449" y="695.6" width="22" height="12" fill="#fbd865"/>
 <path d="M452.4 707.6 L452.4 700.6 L467.6 700.6 L467.6 707.6 L464.4 707.6 L464.4 703.6 L455.6 703.6 L455.6 707.6Z" fill="#3f8ad8"/>
 <rect x="449" y="706.4" width="22" height="1.2" fill="#e0a020"/>
</g>

<!-- Firefox taskbar -->
<g>
 <path d="M512.3 686.3 C514.2 687.4 515.8 689.3 516.9 691.7 C519.1 693.6 520.4 696.6 520.4 699.8 C520.4 706.3 515.2 711.7 508.5 711.7 C501.8 711.7 496.6 706.3 496.6 699.8 C496.6 696 498 693 499.9 691.1 C499.9 692.2 500.1 693 500.7 693.6 C501.2 691.7 502.3 690 503.9 689.2 C503.6 690.3 503.9 691.4 504.5 692.2 C506.1 691.1 508.3 690.6 510.2 691.1 C509.9 689.2 510.7 687.4 512.3 686.3Z" fill="url(#tF)"/>
 <circle cx="508.3" cy="699" r="5.3" fill="#6a3fd8"/>
 <path d="M503.1 697.4 C503.9 694.1 506.9 692.5 509.9 693 C512.3 693.6 513.4 695.2 513.7 696.3 C511.8 694.9 509.4 695.2 508.3 696.6 C509.9 696.6 510.7 697.4 510.4 698.5 C509.4 699.8 505.8 700.1 504.2 698.7Z" fill="#ff9a1f"/>
</g>

<!-- WinRAR taskbar -->
<g>
 <rect x="546" y="688.5" width="24" height="7.6" rx="1" fill="#d81e58"/>
 <rect x="546" y="696" width="24" height="7.6" rx="1" fill="#4a52c8"/>
 <rect x="546" y="703.5" width="24" height="7.6" rx="1" fill="#1e9434"/>
 <rect x="546" y="688.5" width="3" height="22.6" fill="#f0d040" opacity=".55"/>
 <rect x="554" y="688.5" width="8" height="22.6" fill="url(#tBelt)"/>
 <rect x="553" y="696.4" width="10" height="7" fill="#fff"/><rect x="556" y="698.4" width="4" height="3.4" fill="#6a3018"/>
</g>

<use href="#app" x="595" y="690"/>
<use href="#app" x="644" y="690"/>

<!-- tray -->
<g fill="none" stroke="#fff" stroke-width="1.2">
 <path d="M1073.6 703L1079 697.6L1084.4 703"/>
 <rect x="1098.5" y="696.5" width="6.6" height="7" rx="1.4"/>
 <path d="M1105.4 699.4L1108.4 697.4V702.6L1105.4 700.6"/>
 <path d="M1098.2 693.6C1100.4 692 1104.4 692 1106.6 693.6M1098.2 706.6C1100.4 708.2 1104.4 708.2 1106.6 706.6" stroke-width="1"/>
 <path d="M1123.5 694.5H1134.5V703.5H1123.5ZM1126.4 707.5H1131.6M1129 703.5V707.5" stroke-width="1.1"/>
 <rect x="1120.4" y="695" width="3.6" height="3.2" fill="#0b1321" stroke-width=".9"/>
 <path d="M1122.2 698.2V707.5H1125" stroke-width=".9"/>
 <path d="M1143.4 697.6H1145.6L1149 694.4V705.6L1145.6 702.4H1143.4Z" stroke-width="1"/>
 <path d="M1151.4 697.4C1152.6 698.8 1152.6 701.2 1151.4 702.6M1153.6 695.4C1155.8 698 1155.8 702 1153.6 704.6M1155.8 693.4C1159 697 1159 703 1155.8 706.6" stroke-width="1"/>
 <path d="M1239.5 692.5H1254.5V704.5H1249.6L1247 707.2L1244.4 704.5H1239.5Z" stroke-width="1.2"/>
</g>
<path d="M1275.5 680V720" stroke="#5a6470" stroke-width="1" shape-rendering="crispEdges"/>
</svg>
</body>
</html>
